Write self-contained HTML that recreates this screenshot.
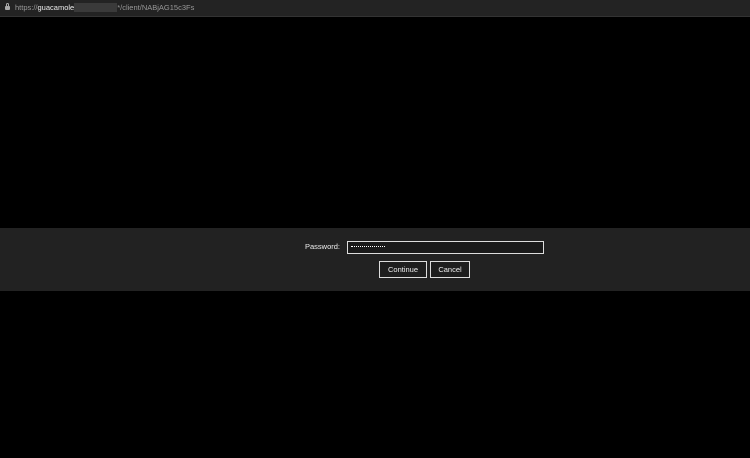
<!DOCTYPE html>
<html><head><meta charset="utf-8"><style>
html,body{margin:0;padding:0;width:750px;height:458px;background:#000;overflow:hidden;font-family:"Liberation Sans",sans-serif;}
.bar{position:absolute;left:0;top:0;width:750px;height:16px;background:#232323;border-bottom:1px solid #333;}
.lock{position:absolute;left:5px;top:6px;width:5px;height:4px;background:#aaa;border-radius:1px;}
.lock:before{content:"";position:absolute;left:1px;top:-3px;width:1px;height:2px;border:1px solid #aaa;border-bottom:none;border-radius:2px 2px 0 0;}
.url{position:absolute;left:15px;top:3px;font-size:7.5px;color:#999;white-space:nowrap;}
.url b{color:#eee;font-weight:normal;}
.blur{display:inline-block;width:43px;height:9px;background:#3a3a3a;vertical-align:-2px;}
.band{position:absolute;left:0;top:228px;width:750px;height:63px;background:#222;}
.lbl{position:absolute;left:305px;top:242px;font-size:7.5px;color:#eee;}
.inp{position:absolute;left:347px;top:241px;width:197px;height:13px;border:1px solid #ddd;background:#1a1a1a;box-sizing:border-box;}
.dots{position:absolute;left:3px;top:4px;width:34px;height:0;border-top:1px dotted #fff;}
.btn{position:absolute;top:261px;height:17px;border:1px solid #ddd;box-sizing:border-box;background:#1e1e1e;color:#eee;font-size:7.5px;text-align:center;line-height:16px;}
</style></head><body>
<div class="bar"><div class="lock"></div><div class="url">https://<b>guacamole</b><span class="blur"></span>*/client/NABjAG15c3Fs</div></div>
<div class="band"></div>
<div class="lbl">Password:</div>
<div class="inp"><div class="dots"></div></div>
<div class="btn" style="left:379px;width:48px;">Continue</div>
<div class="btn" style="left:430px;width:40px;">Cancel</div>
</body></html>
